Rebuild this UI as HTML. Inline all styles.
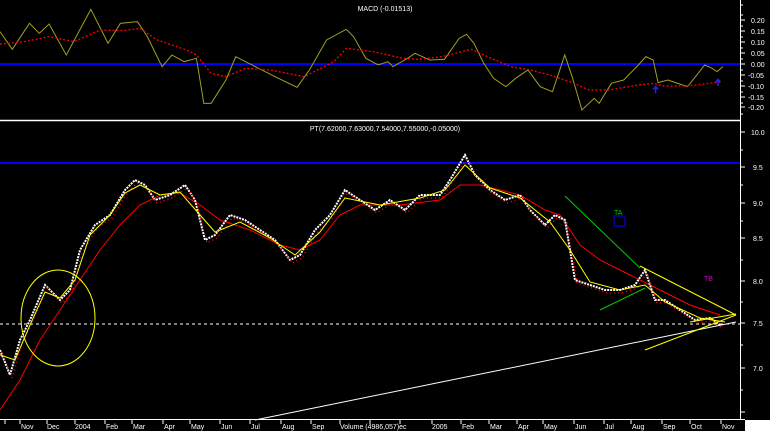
<!DOCTYPE html>
<html><head><style>
html,body{margin:0;padding:0;background:#000;width:770px;height:431px;overflow:hidden}
svg{display:block}
text{font-family:"Liberation Sans",sans-serif;fill:#fff}
</style></head><body>
<svg width="770" height="431" viewBox="0 0 770 431">
<rect width="770" height="431" fill="#000"/>
<line x1="0" y1="120.5" x2="740" y2="120.5" stroke="#fff" stroke-width="1.5"/>
<line x1="740.5" y1="0" x2="740.5" y2="420" stroke="#fff"/>
<line x1="0" y1="419.5" x2="745" y2="419.5" stroke="#fff"/>
<rect x="745" y="420" width="25" height="11" fill="#fff"/>
<text x="385" y="11" font-size="7" text-anchor="middle">MACD (-0.01513)</text>
<text x="385" y="131" font-size="7" text-anchor="middle">PT(7.62000,7.63000,7.54000,7.55000,-0.05000)</text>
<line x1="0" y1="64" x2="740" y2="64" stroke="#00f" stroke-width="2"/>
<g transform="scale(0.4911,0.3333)">
<polyline fill="none" stroke="#a0a020" stroke-width="1" vector-effect="non-scaling-stroke" points="0,95 25,148 60,70 80,100 100,72 135,165 185,28 220,130 245,70 280,65 300,110 330,200 350,165 375,185 400,175 415,310 430,310 460,240 480,170 500,185 520,200 560,230 605,262 630,210 665,120 705,88 720,110 745,175 770,195 790,185 800,200 830,175 845,160 875,180 905,178 935,115 950,103 965,130 985,190 1005,235 1030,260 1050,235 1075,210 1100,260 1125,275 1150,165 1165,230 1185,330 1210,295 1220,310 1245,250 1270,240 1300,195 1315,170 1330,180 1340,248 1360,240 1400,260 1435,195 1450,205 1460,215 1472,200"/>
<polyline fill="none" stroke="#f00" stroke-width="1.3" vector-effect="non-scaling-stroke" stroke-dasharray="2,2" points="0,132 50,125 100,110 150,125 205,90 250,92 285,85 320,120 380,150 400,165 430,220 460,230 500,205 550,210 620,230 680,185 705,145 760,155 820,175 850,178 900,170 960,148 1000,175 1040,200 1080,210 1120,225 1160,245 1200,270 1240,270 1300,255 1330,250 1350,258 1400,258 1470,245"/>
<path d="M1335,280 V262 M1330,268 L1335,260 L1340,268 M1462,258 V240 M1457,246 L1462,238 L1467,246" stroke="#22f" stroke-width="1.5" vector-effect="non-scaling-stroke" fill="none"/>
</g>
<g font-size="7">
<text x="751" y="23">0.20</text><text x="751" y="34">0.15</text><text x="751" y="45">0.10</text><text x="751" y="56">0.05</text><text x="751" y="67">0.00</text><text x="748" y="78">-0.05</text><text x="748" y="89">-0.10</text><text x="748" y="100">-0.15</text><text x="748" y="110">-0.20</text>
<text x="751" y="135">10.0</text><text x="753" y="170">9.5</text><text x="753" y="206">9.0</text><text x="753" y="241">8.5</text><text x="753" y="284">8.0</text><text x="753" y="326">7.5</text><text x="753" y="371">7.0</text>
</g>
<path d="M740,5h3M740,15h3M740,20h5M740,26h3M740,31h5M740,37h3M740,42h5M740,48h3M740,53h5M740,59h3M740,64h5M740,70h3M740,75h5M740,81h3M740,86h5M740,92h3M740,97h5M740,103h3M740,107h5M740,114h3M740,132h5M740,150h3M740,167h5M740,185h3M740,203h5M740,221h3M740,238h5M740,260h3M740,281h5M740,302h3M740,323h5M740,345h3M740,368h5M740,390h3M740,412h5" stroke="#fff"/>
<line x1="0" y1="163" x2="740" y2="163" stroke="#00f" stroke-width="2"/>
<line x1="0" y1="324" x2="740" y2="324" stroke="#fff" stroke-dasharray="3,3"/>
<line x1="255" y1="420" x2="736" y2="322" stroke="#fff"/>
<polyline fill="none" stroke="#f00" stroke-width="1" points="0,410 20,380 40,340 60,310 80,280 100,250 120,225 140,205 160,195 180,193 200,205 220,220 250,230 280,245 300,250 320,240 340,215 360,205 400,205 440,200 460,185 480,185 520,195 545,210 560,215 580,245 600,260 630,275 660,290 690,305 720,315"/>
<polyline fill="none" stroke="#fff" stroke-width="2" stroke-dasharray="2,1" points="0,350 10,375 20,340 30,320 45,285 60,300 70,290 80,250 95,225 110,215 125,190 135,180 145,185 155,200 170,195 185,185 195,200 205,240 215,235 230,215 245,220 260,230 275,240 290,260 300,255 315,230 330,215 345,190 360,200 375,210 390,200 405,210 420,195 440,195 450,180 465,155 475,175 490,190 505,200 520,195 530,210 545,225 555,215 565,220 575,280 590,285 605,290 620,290 635,285 645,270 655,300 665,300 680,310 695,320 710,318 720,325"/>
<polyline fill="none" stroke="#f00" stroke-width="1.5" stroke-dasharray="1,3" points="2,352 12,378 22,343 32,323 47,288 62,303 72,293 82,253 97,228 112,218 127,193 137,183 147,188 157,203 172,198 187,188 197,203 207,243 217,238 232,218 247,223 262,233 277,243 292,263 302,258 317,233 332,218 347,193 362,203 377,213 392,203 407,213 422,198 442,198 452,183 467,158 477,178 492,193 507,203 522,198 532,213 547,228 557,218 567,223 577,283 592,288 607,293 622,293 637,288 647,273 657,303 667,303 682,313 697,323 712,321 722,328"/>
<polyline fill="none" stroke="#ff0" stroke-width="1" points="0,355 15,360 30,325 45,292 60,298 75,280 90,235 110,215 125,193 140,185 160,195 180,192 200,215 215,232 240,222 270,238 295,255 320,232 345,198 380,205 420,198 445,190 465,165 490,188 520,198 550,222 570,250 590,282 620,290 645,285 665,302 700,318 725,322"/>
<ellipse cx="58" cy="318" rx="37" ry="48" fill="none" stroke="#ff0"/>
<line x1="565" y1="196" x2="640" y2="268" stroke="#0c0"/>
<line x1="600" y1="310" x2="645" y2="288" stroke="#0c0"/>
<line x1="640" y1="266" x2="736" y2="315" stroke="#ff0"/>
<line x1="645" y1="350" x2="736" y2="315" stroke="#ff0"/>
<line x1="690" y1="322" x2="736" y2="314" stroke="#ff0"/>
<text x="614" y="215" font-size="7" style="fill:#0c0">TA</text>
<rect x="614" y="216" width="11" height="10" fill="none" stroke="#00f"/>
<text x="704" y="281" font-size="7" style="fill:#c0c">TB</text>
<path d="M5,420v4M20,420v4M47,420v4M75,420v4M105,420v4M132,420v4M163,420v4M190,420v4M220,420v4M250,420v4M281,420v4M311,420v4M340,420v4M370,420v4M400,420v4M432,420v4M461,420v4M489,420v4M517,420v4M543,420v4M574,420v4M604,420v4M631,420v4M662,420v4M690,420v4M721,420v4" stroke="#fff"/>
<g font-size="7">
<text x="21" y="429">Nov</text><text x="47" y="429">Dec</text><text x="75" y="429">2004</text><text x="106" y="429">Feb</text><text x="133" y="429">Mar</text><text x="164" y="429">Apr</text><text x="191" y="429">May</text><text x="221" y="429">Jun</text><text x="251" y="429">Jul</text><text x="282" y="429">Aug</text><text x="312" y="429">Sep</text><text x="340" y="429">Volume (4986,057)ec</text><text x="432" y="429">2005</text><text x="462" y="429">Feb</text><text x="490" y="429">Mar</text><text x="518" y="429">Apr</text><text x="544" y="429">May</text><text x="575" y="429">Jun</text><text x="605" y="429">Jul</text><text x="632" y="429">Aug</text><text x="663" y="429">Sep</text><text x="691" y="429">Oct</text><text x="722" y="429">Nov</text>
</g>
</svg>
</body></html>
